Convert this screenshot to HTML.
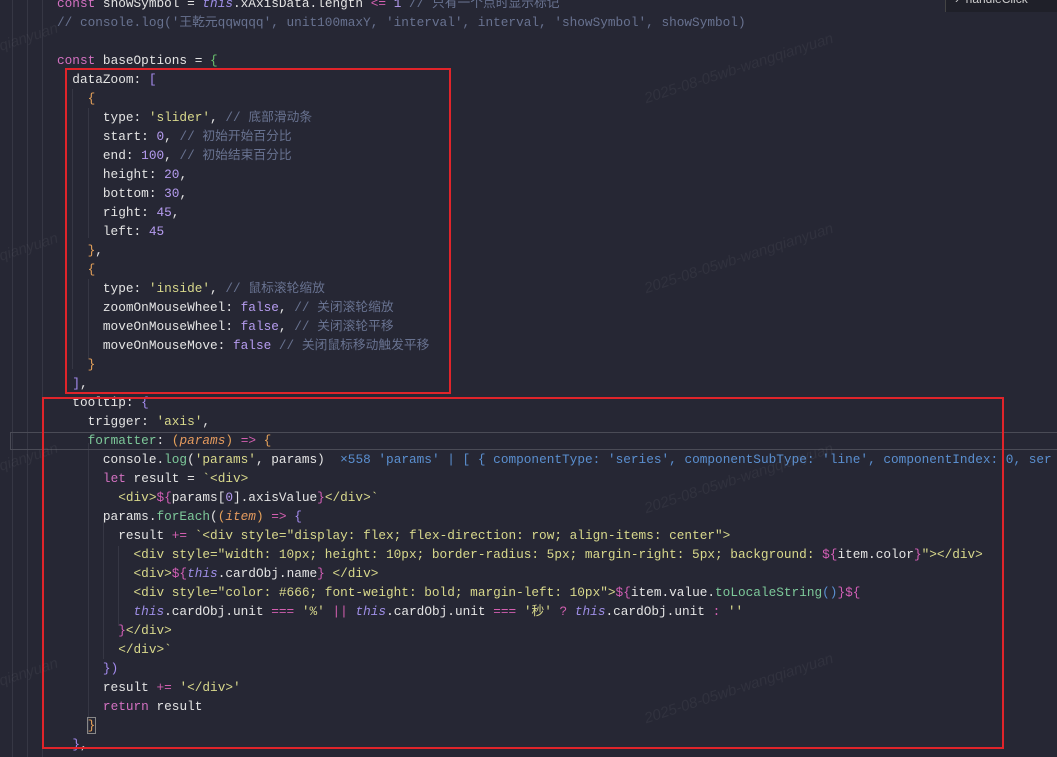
<!DOCTYPE html>
<html><head><meta charset="utf-8"><style>
html,body{margin:0;padding:0;width:1057px;height:757px;overflow:hidden;background:#262734;}
#code{position:absolute;left:57px;top:-6px;margin:0;font-family:"Liberation Mono","Noto Sans CJK SC",monospace;font-size:12.75px;line-height:19px;color:#e4e4e4;white-space:pre;}
.k{color:#d371c1}.s{color:#d9d98c}.n{color:#b69cf0}.c{color:#687290}.f{color:#7dc99a}.p{color:#e49a5e;font-style:italic}
.t{color:#9e8ee6;font-style:italic}.g{color:#6ac26f}.b{color:#a58cf0}.o{color:#e6a25a}.m{color:#d45fb7}.h{color:#5a8fd0}.op{color:#d35fb0}
.box{position:absolute;border:2px solid #e0242a;}
.guide{position:absolute;width:1px;background:#363744;}
.wm{position:absolute;color:rgba(150,150,160,0.1);font-family:"Liberation Sans",sans-serif;font-style:italic;font-size:15px;transform:rotate(-18deg);white-space:nowrap}
</style></head><body>
<div class="guide" style="left:12px;top:0;height:757px"></div>
<div class="guide" style="left:27px;top:0;height:757px"></div>
<div class="guide" style="left:42px;top:0;height:757px"></div>
<div class="guide" style="left:72px;top:89px;height:280px"></div>
<div class="guide" style="left:88px;top:108px;height:130px"></div>
<div class="guide" style="left:88px;top:279px;height:80px"></div>
<div class="guide" style="left:88px;top:443px;height:290px"></div>
<div class="guide" style="left:103px;top:519px;height:140px"></div>
<div class="guide" style="left:118px;top:546px;height:80px"></div>
<div style="position:absolute;left:10px;top:432px;width:1050px;height:16px;border:1px solid #4a4b56;"></div>
<div style="position:absolute;left:945px;top:0;width:112px;height:12px;background:#1f2029;border-left:1px solid #444;"></div>
<div style="position:absolute;left:955px;top:-8px;color:#ccc;font:12px 'Liberation Sans',sans-serif">›&nbsp;&nbsp;handleClick</div>
<pre id="code"><span class="k">const</span> showSymbol = <span class="t">this</span>.xAxisData.length <span class="op">&lt;=</span> <span class="n">1</span> <span class="c">// 只有一个点时显示标记</span>
<span class="c">// console.log('王乾元qqwqqq', unit100maxY, 'interval', interval, 'showSymbol', showSymbol)</span>

<span class="k">const</span> baseOptions = <span class="g">{</span>
  dataZoom: <span class="b">[</span>
    <span class="o">{</span>
      type: <span class="s">'slider'</span>, <span class="c">// 底部滑动条</span>
      start: <span class="n">0</span>, <span class="c">// 初始开始百分比</span>
      end: <span class="n">100</span>, <span class="c">// 初始结束百分比</span>
      height: <span class="n">20</span>,
      bottom: <span class="n">30</span>,
      right: <span class="n">45</span>,
      left: <span class="n">45</span>
    <span class="o">}</span>,
    <span class="o">{</span>
      type: <span class="s">'inside'</span>, <span class="c">// 鼠标滚轮缩放</span>
      zoomOnMouseWheel: <span class="n">false</span>, <span class="c">// 关闭滚轮缩放</span>
      moveOnMouseWheel: <span class="n">false</span>, <span class="c">// 关闭滚轮平移</span>
      moveOnMouseMove: <span class="n">false</span> <span class="c">// 关闭鼠标移动触发平移</span>
    <span class="o">}</span>
  <span class="b">]</span>,
  tooltip: <span class="b">{</span>
    trigger: <span class="s">'axis'</span>,
    <span class="f">formatter</span>: <span class="o">(</span><span class="p">params</span><span class="o">)</span> <span class="op">=&gt;</span> <span class="o">{</span>
      console.<span class="f">log</span>(<span class="s">'params'</span>, params)  <span class="h">×558 'params' | [ { componentType: 'series', componentSubType: 'line', componentIndex: 0, ser</span>
      <span class="k">let</span> result = <span class="s">`&lt;div&gt;</span>
<span class="s">        &lt;div&gt;</span><span class="m">${</span>params[<span class="n">0</span>].axisValue<span class="m">}</span><span class="s">&lt;/div&gt;`</span>
      params.<span class="f">forEach</span>(<span class="o">(</span><span class="p">item</span><span class="o">)</span> <span class="op">=&gt;</span> <span class="b">{</span>
        result <span class="op">+=</span> <span class="s">`&lt;div style="display: flex; flex-direction: row; align-items: center"&gt;</span>
<span class="s">          &lt;div style="width: 10px; height: 10px; border-radius: 5px; margin-right: 5px; background: </span><span class="m">${</span>item.color<span class="m">}</span><span class="s">"&gt;&lt;/div&gt;</span>
<span class="s">          &lt;div&gt;</span><span class="m">${</span><span class="t">this</span>.cardObj.name<span class="m">}</span><span class="s"> &lt;/div&gt;</span>
<span class="s">          &lt;div style="color: #666; font-weight: bold; margin-left: 10px"&gt;</span><span class="m">${</span>item.value.<span class="f">toLocaleString</span><span class="h">()</span><span class="m">}${</span>
          <span class="t">this</span>.cardObj.unit <span class="op">===</span> <span class="s">'%'</span> <span class="op">||</span> <span class="t">this</span>.cardObj.unit <span class="op">===</span> <span class="s">'秒'</span> <span class="op">?</span> <span class="t">this</span>.cardObj.unit <span class="op">:</span> <span class="s">''</span>
        <span class="m">}</span><span class="s">&lt;/div&gt;</span>
<span class="s">        &lt;/div&gt;`</span>
      <span class="b">})</span>
      result <span class="op">+=</span> <span class="s">'&lt;/div&gt;'</span>
      <span class="k">return</span> result
    <span class="o" style="outline:1px solid #888">}</span>
  <span class="b">}</span>,</pre>
<div class="box" style="left:65px;top:68px;width:382px;height:322px"></div>
<div class="box" style="left:42px;top:397px;width:958px;height:348px"></div>
<div class="wm" style="left:640px;top:60px">2025-08-05wb-wangqianyuan</div>
<div class="wm" style="left:640px;top:250px">2025-08-05wb-wangqianyuan</div>
<div class="wm" style="left:640px;top:470px">2025-08-05wb-wangqianyuan</div>
<div class="wm" style="left:640px;top:680px">2025-08-05wb-wangqianyuan</div>
<div class="wm" style="left:-10px;top:30px">gqianyuan</div>
<div class="wm" style="left:-10px;top:240px">gqianyuan</div>
<div class="wm" style="left:-10px;top:450px">gqianyuan</div>
<div class="wm" style="left:-10px;top:665px">gqianyuan</div>
</body></html>
